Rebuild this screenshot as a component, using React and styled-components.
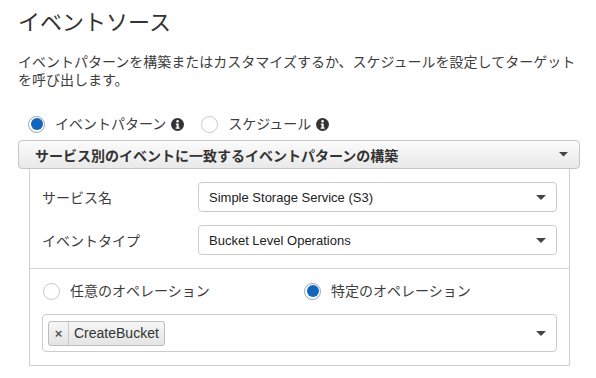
import styled, { createGlobalStyle } from "styled-components";

const GlobalStyle = createGlobalStyle`
  body {
    margin: 0;
    background: #fff;
    font-family: "Liberation Sans", "Noto Sans CJK JP", sans-serif;
    color: #444;
  }
`;

function InfoIcon() {
  return (
    <svg width="13" height="13" viewBox="0 0 13 13">
      <circle cx="6.5" cy="6.5" r="6.5" fill="#333" />
      <circle cx="6.6" cy="3.3" r="1.3" fill="#fff" />
      <path d="M4.8 5.4h2.9v4.1h1v1.3H4.6V9.5h1V6.7h-.8z" fill="#fff" />
    </svg>
  );
}

function Caret({ size = 10 }) {
  return (
    <svg width={size} height={size / 2} viewBox="0 0 10 5">
      <path d="M0 0h10L5 5z" fill="#444" />
    </svg>
  );
}

export default function App() {
  return (
    <Page>
      <GlobalStyle />
      <Title>イベントソース</Title>
      <Description>
        イベントパターンを構築またはカスタマイズするか、スケジュールを設定してターゲットを呼び出します。
      </Description>

      <ModeRow>
        <RadioOption>
          <Radio $checked />
          <span>イベントパターン</span>
          <InfoIcon />
        </RadioOption>
        <RadioOption>
          <Radio />
          <span>スケジュール</span>
          <InfoIcon />
        </RadioOption>
      </ModeRow>

      <AccordionHeader>
        <span>サービス別のイベントに一致するイベントパターンの構築</span>
        <Caret size={9} />
      </AccordionHeader>

      <Panel>
        <FieldSection>
          <FieldRow>
            <FieldLabel>サービス名</FieldLabel>
            <Select>
              <span>Simple Storage Service (S3)</span>
              <Caret />
            </Select>
          </FieldRow>
          <FieldRow>
            <FieldLabel>イベントタイプ</FieldLabel>
            <Select>
              <span>Bucket Level Operations</span>
              <Caret />
            </Select>
          </FieldRow>
        </FieldSection>

        <OperationSection>
          <OperationChoices>
            <RadioOption>
              <Radio />
              <span>任意のオペレーション</span>
            </RadioOption>
            <RadioOption>
              <Radio $checked />
              <span>特定のオペレーション</span>
            </RadioOption>
          </OperationChoices>
          <MultiSelect>
            <Tag>
              <TagRemove>×</TagRemove>
              <TagText>CreateBucket</TagText>
            </Tag>
            <Caret />
          </MultiSelect>
        </OperationSection>
      </Panel>
    </Page>
  );
}

const Page = styled.div`
  width: 596px;
  box-sizing: border-box;
  padding: 9px 16px 0 18px;
`;

const Title = styled.h1`
  margin: 0;
  font-size: 22px;
  line-height: 28px;
  font-weight: normal;
  color: #333;
`;

const Description = styled.p`
  margin: 16px 0 0;
  font-size: 14px;
  line-height: 18px;
  color: #3d3d3d;
`;

const ModeRow = styled.div`
  display: flex;
  align-items: center;
  gap: 17px;
  margin-top: 25px;
  padding-left: 10px;
  height: 20px;
`;

const RadioOption = styled.label`
  display: flex;
  align-items: center;
  gap: 10px;
  font-size: 14px;
  line-height: 20px;
  color: #3d3d3d;

  svg {
    margin-left: -5px;
  }
`;

const Radio = styled.span`
  position: relative;
  width: 17px;
  height: 17px;
  box-sizing: border-box;
  border-radius: 50%;
  border: 1px solid ${(p) => (p.$checked ? "#98a4b4" : "#c8c8c8")};
  background: #fff;
  flex: none;

  &::after {
    content: "";
    display: ${(p) => (p.$checked ? "block" : "none")};
    position: absolute;
    inset: 1.5px;
    border-radius: 50%;
    background: #1166bb;
  }
`;

const AccordionHeader = styled.div`
  display: flex;
  align-items: center;
  justify-content: space-between;
  margin-top: 6px;
  height: 29px;
  box-sizing: border-box;
  padding: 0 11px 0 16px;
  border: 1px solid #c6c6c6;
  border-radius: 4px;
  background: linear-gradient(#fbfbfb, #e9e9e9);
  font-size: 14px;
  font-weight: bold;
  color: #333;
`;

const Panel = styled.div`
  margin: 0 10px 0 11px;
  border: 1px solid #cfcfcf;
  border-top: none;
`;

const FieldSection = styled.div`
  display: flex;
  flex-direction: column;
  gap: 13px;
  padding: 13px 12px 13px 12px;
  border-bottom: 1px solid #d5d5d5;
`;

const FieldRow = styled.div`
  display: grid;
  grid-template-columns: 156px 1fr;
  align-items: center;
`;

const FieldLabel = styled.span`
  font-size: 14px;
  color: #3d3d3d;
`;

const Select = styled.div`
  display: flex;
  align-items: center;
  justify-content: space-between;
  height: 30px;
  box-sizing: border-box;
  padding: 0 10px;
  border: 1px solid #ccc;
  border-radius: 4px;
  background: #fff;
  font-size: 13px;
  color: #222;
`;

const OperationSection = styled.div`
  padding: 12px 12px 13px 12px;
`;

const OperationChoices = styled.div`
  display: grid;
  grid-template-columns: 261px 1fr;
  height: 20px;
  align-items: center;
  padding-left: 1px;
  margin-bottom: 13px;
`;

const MultiSelect = styled.div`
  display: flex;
  align-items: center;
  justify-content: space-between;
  height: 38px;
  box-sizing: border-box;
  padding: 0 10px 0 5px;
  border: 1px solid #ccc;
  border-radius: 4px;
`;

const Tag = styled.div`
  display: flex;
  align-items: stretch;
  height: 25px;
  box-sizing: border-box;
  border: 1px solid #bdbdbd;
  border-radius: 3px;
  background: linear-gradient(#f6f6f6, #e4e4e4);
  font-size: 14px;
  color: #333;
`;

const TagRemove = styled.span`
  display: flex;
  align-items: center;
  justify-content: center;
  width: 19px;
  border-right: 1px solid #c8c8c8;
  font-size: 13px;
  font-weight: bold;
  color: #555;
`;

const TagText = styled.span`
  display: flex;
  align-items: center;
  padding: 0 5px 0 5px;
`;
